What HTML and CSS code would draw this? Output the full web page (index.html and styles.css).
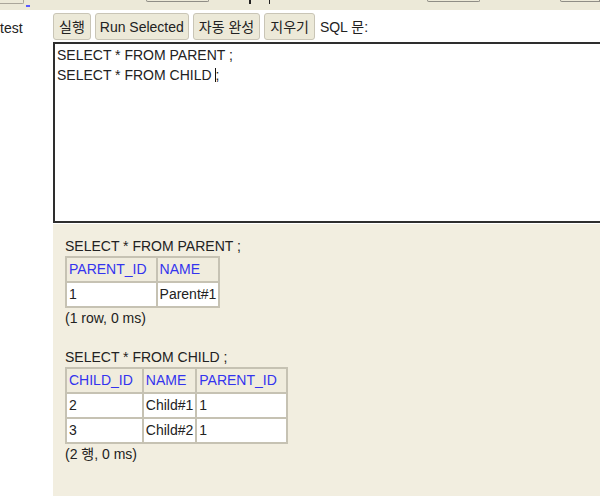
FILE: index.html
```html
<!DOCTYPE html>
<html lang="ko">
<head>
<meta charset="utf-8">
<title>H2 Console</title>
<link rel="stylesheet" href="styles.css">
</head>
<body>
<div class="topstrip">
  <div class="tb-box1"></div>
  <div class="tb-mark"></div>
  <div class="tb-box2"></div>
  <div class="tb-glyph g1"></div>
  <div class="tb-glyph g2"></div>
  <div class="tb-box3"></div>
  <div class="tb-box4"></div>
</div>
<div class="main">
  <div class="tree">
    <div class="tree-item">test</div>
  </div>
  <div class="work">
    <div class="toolbar">
      <button class="btn">실행</button>
      <button class="btn btn-wide">Run Selected</button>
      <button class="btn">자동 완성</button>
      <button class="btn">지우기</button>
      <span class="sql-label">SQL 문:</span>
    </div>
    <div class="editor">
      <div class="line">SELECT * FROM PARENT ;</div>
      <div class="line">SELECT * FROM CHILD <span class="caret"></span>;</div>
    </div>
    <div class="results">
      <div class="query">SELECT * FROM PARENT ;</div>
      <table class="rs">
        <tr><th>PARENT_ID</th><th>NAME</th></tr>
        <tr><td>1</td><td>Parent#1</td></tr>
      </table>
      <div class="status">(1 row, 0 ms)</div>

      <div class="query">SELECT * FROM CHILD ;</div>
      <table class="rs">
        <tr><th>CHILD_ID</th><th>NAME</th><th>PARENT_ID</th></tr>
        <tr><td>2</td><td>Child#1</td><td>1</td></tr>
        <tr><td>3</td><td>Child#2</td><td>1</td></tr>
      </table>
      <div class="status">(2 행, 0 ms)</div>
    </div>
  </div>
</div>
</body>
</html>
```
FILE: styles.css
```css
html, body {
  margin: 0;
  padding: 0;
  width: 600px;
  height: 496px;
  overflow: hidden;
  background: #fff;
  font-family: "Liberation Sans", "Noto Sans CJK KR", sans-serif;
  font-size: 14px;
  color: #222;
}

.topstrip {
  height: 10px;
  background: #ece9d8;
  display: flex;
  align-items: flex-start;
}
.tb-box1 {
  width: 24px;
  height: 3px;
  border-right: 1px solid #aaa69a;
  border-bottom: 1px solid #aaa69a;
  border-bottom-right-radius: 2px;
}
.tb-mark {
  width: 4px;
  height: 2px;
  margin-left: 2px;
  margin-top: 5px;
  background: #5a5aff;
}
.tb-box2 {
  width: 64px;
  height: 1px;
  margin-left: 116px;
  border: 1px solid #8f8d86;
  border-top: none;
  border-radius: 0 0 3px 3px;
}
.tb-glyph {
  width: 2px;
  height: 4px;
  background: #222;
}
.g1 { margin-left: 40px; }
.g2 { margin-left: 18px; }
.tb-box3 {
  width: 53px;
  height: 1px;
  margin-left: 157px;
  border: 1px solid #8f8d86;
  border-top: none;
  border-radius: 0 0 3px 3px;
}
.tb-box4 {
  width: 40px;
  height: 1px;
  margin-left: 80px;
  border: 1px solid #8f8d86;
  border-top: none;
  border-radius: 0 0 0 3px;
}

.main {
  display: flex;
  height: 486px;
}
.tree {
  width: 53px;
  flex: none;
}
.tree-item {
  padding-top: 9px;
  line-height: 18px;
  margin-left: 0;
}

.work {
  flex: none;
  width: 560px;
  display: flex;
  flex-direction: column;
}

.toolbar {
  height: 32px;
  display: flex;
  align-items: flex-start;
  gap: 4px;
  padding-top: 3px;
  box-sizing: border-box;
}
.btn {
  font-family: "Liberation Sans", "Noto Sans CJK KR", sans-serif;
  font-size: 14px;
  color: #222;
  background: #ece9d8;
  border: 1px solid #c9c5b6;
  border-radius: 3px;
  height: 27px;
  padding: 2px 5px 0;
  margin: 0;
  line-height: 23px;
}
.btn-wide { padding: 2px 4px 0; }
.sql-label {
  margin-left: 1px;
  line-height: 29px;
}

.editor {
  border: 2px solid #2e2e2e;
  padding: 1px 2px;
  box-sizing: content-box;
  height: 175px;
}
.line {
  line-height: 20px;
  white-space: pre;
}
.caret {
  display: inline-block;
  width: 1px;
  height: 14px;
  background: #111;
  vertical-align: -2px;
  margin-right: -1px;
}

.results {
  flex: 1;
  margin-top: 1px;
  background: #f2eee0;
  padding: 13px 12px 0;
  line-height: 18px;
}
.query {
  line-height: 18px;
}
.rs {
  border-collapse: collapse;
  margin-top: 1px;
}
.rs th, .rs td {
  border: 2px solid #c6c2b3;
  line-height: 17px;
  text-align: left;
  font-weight: normal;
  white-space: nowrap;
}
.rs th {
  color: #3434ee;
  background: #f0ecdd;
  padding: 3px 9px 3px 2px;
}
.rs td {
  background: #fff;
  padding: 3px 2px 3px 2px;
}
.status {
  margin-top: 1px;
  margin-bottom: 21px;
}
```
